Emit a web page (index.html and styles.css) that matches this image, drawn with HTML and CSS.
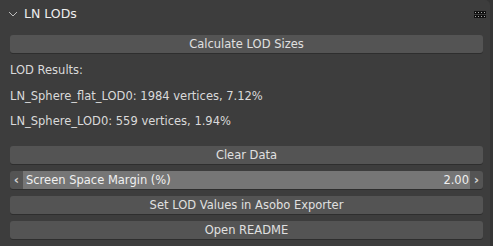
FILE: index.html
```
<!DOCTYPE html>
<html>
    <head>
        <meta charset = utf-8>
        <title>LN LODs</title>
        <link rel="stylesheet" href="styles.css">
    </head>

    <body>
        <div class = panel>
            <div class = header>
                <svg class = chevron width = 10 height = 6 viewBox = "0 0 10 6">
                    <path d = "M1 1 L5 5 L9 1" fill = none stroke = "#bdbdbd" stroke-width = 1.2/>
                </svg>
                <span class = title>LN LODs</span>
                <span class = grip>
                    <i></i><i></i><i></i><i></i><i></i><i></i><i></i><i></i>
                </span>
            </div>

            <div class = body>
                <button class = btn>Calculate LOD Sizes</button>

                <div class = results>
                    <div class = label>LOD Results:</div>
                    <div class = label>LN_Sphere_flat_LOD0: 1984 vertices, 7.12%</div>
                    <div class = label>LN_Sphere_LOD0: 559 vertices, 1.94%</div>
                </div>

                <div class = stack>
                    <button class = btn>Clear Data</button>
                    <div class = slider>
                        <span class = arrow>&lsaquo;</span>
                        <span class = fill>
                            <span>Screen Space Margin (%)</span>
                            <span>2.00</span>
                        </span>
                        <span class = arrow>&rsaquo;</span>
                    </div>
                    <button class = btn>Set LOD Values in Asobo Exporter</button>
                    <button class = btn>Open README</button>
                </div>
            </div>
        </div>
    </body>
</html>
```

FILE: styles.css
```
html {
    background-color: #353535;
}

body {
    margin: 0;
    width: 493px;
    height: 246px;
    font-family: "DejaVu Sans", sans-serif;
    font-size: 11.5px;
    color: #e0e0e0;
}

.panel {
    background: #3d3d3d;
    width: 490px;
    height: 246px;
    border-top-right-radius: 5px
}

.header {
    display: flex;
    align-items: center;
    height: 27px;
    padding: 0 5px 0 8px
}

.chevron {margin: 1px 6px 0 0}

.title {
    font-size: 12.5px;
    flex: 1;
    color: #eee
}

.grip {
    display: grid;
    grid-template-columns: repeat(4, 2px);
    gap: 1px;
    margin: 1px 0 0 0
}

.grip i {
    width: 1px;
    height: 1px;
    background: #aaa;
    border: 0.5px solid #111
}

.body {padding: 8px 7px 0 10px}

.btn {
    display: block;
    width: 100%;
    height: 18px;
    font: inherit;
    line-height: 18px;
    color: #e0e0e0;
    background: #545454;
    border: none;
    border-radius: 3px;
    box-shadow: 0 1px 0 #2e2e2e;
    padding: 0
}

.results {
    display: flex;
    flex-direction: column;
    gap: 5.5px;
    padding: 7px 0 15px 0
}

.label {
    line-height: 20px;
    color: #dadada
}

.stack {
    display: flex;
    flex-direction: column;
    gap: 7px
}

.slider {
    display: flex;
    height: 18px;
    line-height: 18px;
    background: #545454;
    border-radius: 3px;
    box-shadow: 0 1px 0 #2e2e2e;
    overflow: hidden
}

.arrow {
    width: 13px;
    text-align: center;
    font-size: 13px;
    font-weight: bold;
    color: #d0d0d0
}

.fill {
    flex: 1;
    display: flex;
    justify-content: space-between;
    background: #767676;
    padding: 0 1px 0 3px;
    color: #f0f0f0
}
```
